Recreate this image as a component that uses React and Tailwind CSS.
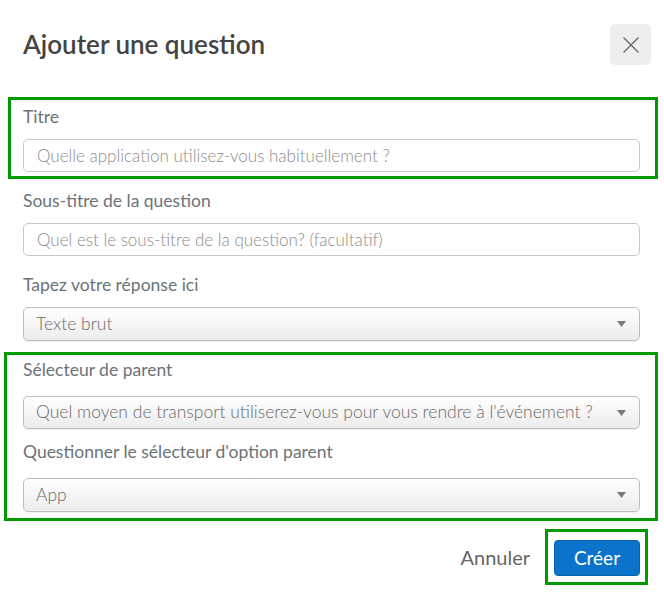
import { X } from "lucide-react";

function Field({ label, children, gap = "mb-[12px]" }) {
    return (
        <div>
            <div className={"h-[20px] text-[17.5px] leading-[20px] text-[#6b7378] " + gap}>{label}</div>
            {children}
        </div>
    );
}

function TextInput({ placeholder }) {
    return (
        <div className="flex h-[33px] items-center rounded-[5px] border border-[#c5c9cc] bg-white pl-[13px] text-[17px] font-light text-[#8c8c8c]">
            {placeholder}
        </div>
    );
}

function Select({ value, height = "h-[33px]" }) {
    return (
        <div className={"flex items-center justify-between rounded-[5px] border border-[#b9bec3] bg-gradient-to-b from-white to-[#ececec] pl-[12px] pr-[13px] text-[17.5px] font-light text-[#6a6a6a] shadow-[0_1px_1px_rgba(0,0,0,0.06)] " + height}>
            <span className="truncate">{value}</span>
            <svg width="9" height="6" viewBox="0 0 9 6" className="ml-3 shrink-0">
                <path d="M0 0 L9 0 L4.5 6 Z" fill="#7a7a7a" />
            </svg>
        </div>
    );
}

export default function App() {
    return (
        <div className="h-[602px] w-[664px] bg-white font-['Lato',sans-serif]">
            {/* Header */}
            <div className="flex items-center justify-between pl-[23px] pr-[13px] pt-[24px]">
                <h1 className="text-[26px] font-semibold text-[#444]">Ajouter une question</h1>
                <button className="flex h-[41px] w-[41px] items-center justify-center rounded-[5px] bg-[#eeeeee] text-[#666]">
                    <X size={28} strokeWidth={1.2} />
                </button>
            </div>

            <div className="mt-[32px] pl-[23px] pr-[24px]">
                {/* Titre (highlighted) */}
                <div className="-ml-[15px] -mr-[18px] border-[3px] border-[#009a00] pb-[4px] pl-[12px] pr-[15px] pt-[7px]">
                    <Field label="Titre">
                        <TextInput placeholder="Quelle application utilisez-vous habituellement ?" />
                    </Field>
                </div>

                <div className="mt-[12px]">
                    <Field label="Sous-titre de la question">
                        <TextInput placeholder="Quel est le sous-titre de la question? (facultatif)" />
                    </Field>
                </div>

                <div className="mt-[19px]">
                    <Field label="Tapez votre réponse ici">
                        <Select value="Texte brut" height="h-[34px]" />
                    </Field>
                </div>

                {/* Parent selectors (highlighted) */}
                <div className="-ml-[19px] -mr-[18px] mt-[11px] border-[3px] border-[#009a00] pb-[6px] pl-[16px] pr-[15px] pt-[5px]">
                    <Field label="Sélecteur de parent" gap="mb-[16px]">
                        <Select value="Quel moyen de transport utiliserez-vous pour vous rendre à l'événement ?" />
                    </Field>
                    <div className="mt-[13px]">
                        <Field label="Questionner le sélecteur d'option parent" gap="mb-[16px]">
                            <Select value="App" height="h-[34px]" />
                        </Field>
                    </div>
                </div>

                {/* Footer */}
                <div className="-mr-[8px] mt-[8px] flex items-center justify-end">
                    <button className="mr-[15px] text-[20px] text-[#666]">Annuler</button>
                    <div className="border-[3px] border-[#009a00] pb-[6px] pl-[6px] pr-[5px] pt-[8px]">
                        <button className="flex h-[36px] w-[86px] items-center justify-center rounded-[4px] border border-[#0a63b0] bg-[#0b73c9] text-[19px] text-white">
                            Créer
                        </button>
                    </div>
                </div>
            </div>
        </div>
    );
}
